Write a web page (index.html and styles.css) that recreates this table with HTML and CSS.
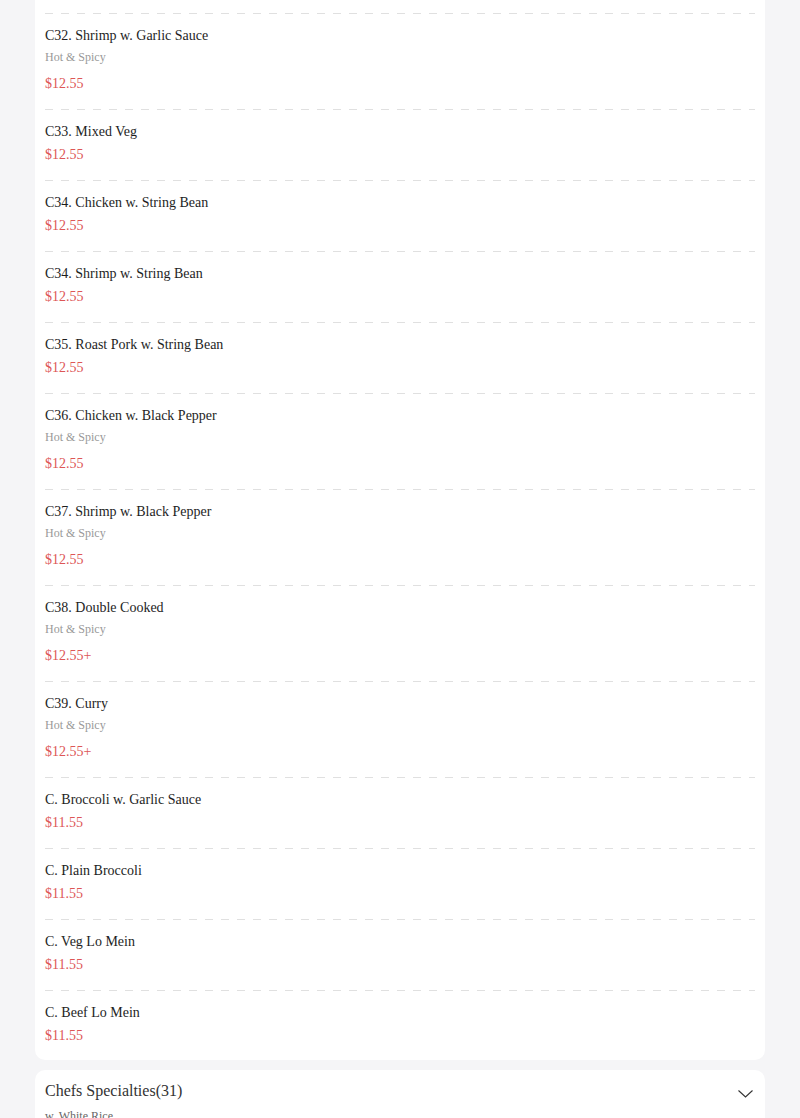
FILE: index.html
```
<!DOCTYPE html>
<html>
<head>
<meta charset="utf-8">
<link rel="stylesheet" href="styles.css">
</head>
<body>
<div class="page">
  <section class="card card-open">
    <div class="item">
      <div class="name">C32. Shrimp w. Garlic Sauce</div>
      <div class="note">Hot &amp; Spicy</div>
      <div class="price">$12.55</div>
    </div>
    <div class="item">
      <div class="name">C33. Mixed Veg</div>
      <div class="price">$12.55</div>
    </div>
    <div class="item">
      <div class="name">C34. Chicken w. String Bean</div>
      <div class="price">$12.55</div>
    </div>
    <div class="item">
      <div class="name">C34. Shrimp w. String Bean</div>
      <div class="price">$12.55</div>
    </div>
    <div class="item">
      <div class="name">C35. Roast Pork w. String Bean</div>
      <div class="price">$12.55</div>
    </div>
    <div class="item">
      <div class="name">C36. Chicken w. Black Pepper</div>
      <div class="note">Hot &amp; Spicy</div>
      <div class="price">$12.55</div>
    </div>
    <div class="item">
      <div class="name">C37. Shrimp w. Black Pepper</div>
      <div class="note">Hot &amp; Spicy</div>
      <div class="price">$12.55</div>
    </div>
    <div class="item">
      <div class="name">C38. Double Cooked</div>
      <div class="note">Hot &amp; Spicy</div>
      <div class="price">$12.55+</div>
    </div>
    <div class="item">
      <div class="name">C39. Curry</div>
      <div class="note">Hot &amp; Spicy</div>
      <div class="price">$12.55+</div>
    </div>
    <div class="item">
      <div class="name">C. Broccoli w. Garlic Sauce</div>
      <div class="price">$11.55</div>
    </div>
    <div class="item">
      <div class="name">C. Plain Broccoli</div>
      <div class="price">$11.55</div>
    </div>
    <div class="item">
      <div class="name">C. Veg Lo Mein</div>
      <div class="price">$11.55</div>
    </div>
    <div class="item">
      <div class="name">C. Beef Lo Mein</div>
      <div class="price">$11.55</div>
    </div>
  </section>
  <section class="card card-closed">
    <div class="cat-head">
      <div class="cat-title">Chefs Specialties(31)</div>
      <svg class="chev" width="15" height="8" viewBox="0 0 15 8"><path d="M0.5 0.5 L7.5 7 L14.5 0.5" fill="none" stroke="#333" stroke-width="1.1"/></svg>
    </div>
    <div class="cat-note">w. White Rice</div>
  </section>
</div>
</body>
</html>
```
FILE: styles.css
```
html, body {
  margin: 0;
  padding: 0;
  background: #f5f5f7;
}
body {
  font-family: "Liberation Serif", "Times New Roman", serif;
  color: #1e1e1e;
}
.page {
  width: 730px;
  margin: 0 auto;
  display: flex;
  flex-direction: column;
  gap: 10px;
}
.card {
  background: #fff;
  padding: 0 10px;
}
.card-open {
  padding-top: 13px;
  border-radius: 0 0 10px 10px;
}
.item {
  padding: 12px 0 14px;
  background-image: linear-gradient(to right, #e0e0e0 0 8px, transparent 8px 16px);
  background-size: 16px 1px;
  background-repeat: repeat-x;
  background-position: 0 0;
}
.item:last-child {
  padding-bottom: 13px;
}
.name {
  font-size: 14px;
  line-height: 22px;
  color: #1e1e1e;
}
.note {
  font-size: 12px;
  line-height: 18px;
  color: #999;
  margin: 1px 0 7px;
}
.price {
  font-size: 14px;
  line-height: 22px;
  color: #dd5656;
  margin-top: 1px;
}
.card-closed {
  border-radius: 10px 10px 0 0;
  padding-top: 9px;
  height: 60px;
}
.cat-head {
  display: flex;
  align-items: center;
  justify-content: space-between;
}
.cat-title {
  font-size: 16px;
  line-height: 24px;
  color: #333;
}
.chev {
  display: block;
  margin-right: 2px;
  margin-top: 6px;
}
.cat-note {
  font-size: 12px;
  line-height: 18px;
  color: #666;
  margin-top: 4px;
}
```
